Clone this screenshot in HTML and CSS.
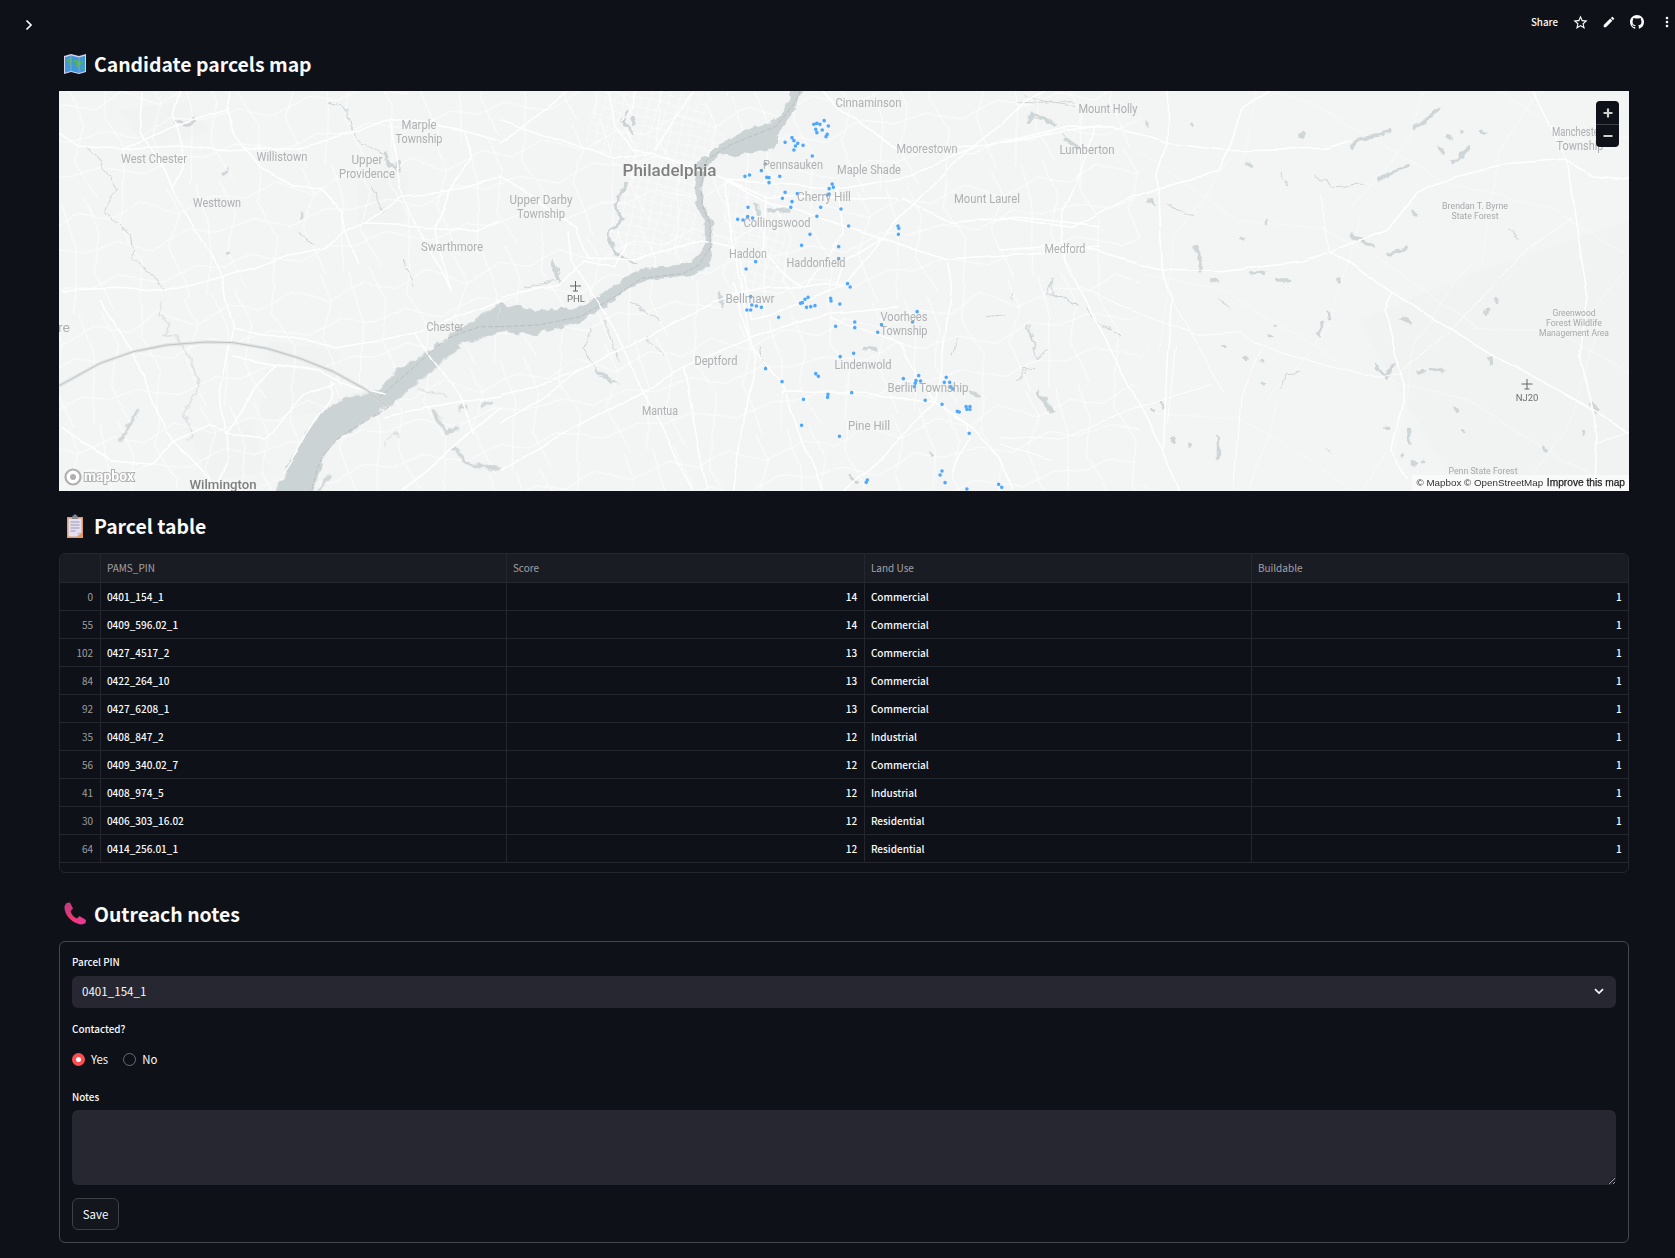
FILE: index.html
```html
<!DOCTYPE html>
<html lang="en">
<head>
<meta charset="utf-8">
<title>Candidate parcels map</title>
<link rel="stylesheet" href="styles.css">
</head>
<body>
<header class="topbar">
  <button class="icon-btn chevron" aria-label="Expand sidebar"><svg width="14" height="14" viewBox="0 0 14 14"><path d="M4.500 2.500 9 7l-4.500 4.500" fill="none" stroke="#fafafa" stroke-width="1.700"/></svg></button>
  <div class="actions">
    <span class="share">Share</span>
    <button class="icon-btn star" aria-label="Star"><svg width="17" height="17" viewBox="0 0 24 24"><path fill="#fafafa" d="M22 9.240l-7.190-.62L12 2 9.190 8.630 2 9.240l5.460 4.730L5.820 21 12 17.270 18.180 21l-1.630-7.030L22 9.240zM12 15.400l-3.760 2.270 1-4.280-3.320-2.880 4.380-.38L12 6.100l1.710 4.040 4.380.38-3.320 2.880 1 4.280L12 15.400z"/></svg></button>
    <button class="icon-btn" aria-label="Edit"><svg width="14" height="14" viewBox="0 0 24 24"><path fill="#fafafa" d="M3 17.250V21h3.750L17.810 9.940l-3.750-3.750L3 17.250zM20.710 7.040c.39-.39.39-1.020 0-1.410l-2.340-2.340c-.39-.39-1.020-.39-1.410 0l-1.830 1.830 3.750 3.750 1.830-1.830z"/></svg></button>
    <button class="icon-btn" aria-label="GitHub"><svg width="14" height="14" viewBox="0 0 16 16"><path fill="#fafafa" d="M8 0C3.580 0 0 3.580 0 8c0 3.540 2.290 6.530 5.470 7.590.4.070.55-.17.55-.38 0-.19-.01-.82-.01-1.490-2.010.37-2.530-.49-2.690-.94-.09-.23-.48-.94-.82-1.130-.28-.15-.68-.52-.01-.53.63-.01 1.080.58 1.230.82.720 1.210 1.870.87 2.330.66.070-.52.28-.87.51-1.070-1.780-.2-3.640-.89-3.640-3.950 0-.87.31-1.590.82-2.150-.08-.2-.36-1.020.08-2.120 0 0 .67-.21 2.200.82.64-.18 1.320-.27 2-.27.68 0 1.360.09 2 .27 1.530-1.040 2.200-.82 2.200-.82.44 1.100.16 1.920.08 2.120.51.56.82 1.270.82 2.150 0 3.070-1.870 3.750-3.650 3.950.29.25.54.73.54 1.480 0 1.070-.01 1.930-.01 2.200 0 .21.15.46.55.38A8.013 8.013 0 0016 8c0-4.420-3.580-8-8-8z"/></svg></button>
    <button class="icon-btn kebab" aria-label="Menu"><svg width="16" height="16" viewBox="0 0 24 24"><path fill="#fafafa" d="M12 8c1.100 0 2-.9 2-2s-.9-2-2-2-2 .9-2 2 .9 2 2 2zm0 2c-1.100 0-2 .9-2 2s.9 2 2 2 2-.9 2-2-.9-2-2-2zm0 6c-1.100 0-2 .9-2 2s.9 2 2 2 2-.9 2-2-.9-2-2-2z"/></svg></button>
  </div>
</header>

<main class="page">
  <h2 class="heading">
    <svg class="emoji" width="24" height="22" viewBox="0 0 24 22"><path d="M1 3 8 1l8 2 7-2v18l-7 2-8-2-7 2z" fill="#d9d4ea"/><path d="M2 4.200 8 2.600l8 2 6-1.800v15.400l-6 1.800-8-2-6 1.800z" fill="#3f97dc"/><path d="M3.500 6 8 5l1.500 2-2 2 1 4-2 .5-1-4-2-1zM11 6l4 1 1 2 3-2 1.500 1.500-2 3-2 .5-1 3-2-.5-1-3-1.500-2zM19 14l1.500 0 .5 2-2 .5z" fill="#4fb06a"/><path d="M8 1v18M16 3v18" stroke="#b9b3d2" stroke-width=".5"/></svg>
    <span>Candidate parcels map</span>
  </h2>

  <section class="map">
    <svg class="map-svg" width="1570" height="400" viewBox="0 0 1570 400" aria-label="Map of the Philadelphia region">
      <defs>
        <pattern id="mesh" width="136" height="112" patternUnits="userSpaceOnUse" patternTransform="rotate(-9)">
          <path class="mesh-line" d="M0 14 30 24 62 10 98 28 136 14M8 0 18 36 6 74 20 112M48 0 40 30 56 66 46 112M92 0 100 28 84 60 98 112M122 0 128 44 116 112M0 52 36 46 70 58 108 44 136 52M0 88 30 80 74 94 110 82 136 88"/>
        </pattern>
        <pattern id="sparse" width="260" height="210" patternUnits="userSpaceOnUse" patternTransform="rotate(24)">
          <path class="mesh-line faint" d="M0 40 90 60 170 30 260 40M60 0 40 100 70 210M200 0 215 120 190 210M0 150 110 130 260 150"/>
        </pattern>
        <pattern id="grid" width="9" height="9" patternUnits="userSpaceOnUse" patternTransform="rotate(14)">
          <path class="mesh-line" d="M0 0H9M0 0V9"/>
        </pattern>
        <filter id="shore" filterUnits="userSpaceOnUse" x="0" y="0" width="1570" height="400">
          <feTurbulence type="fractalNoise" baseFrequency=".11" numOctaves="2" seed="4" result="n"/>
          <feDisplacementMap in="SourceGraphic" in2="n" scale="8" xChannelSelector="R" yChannelSelector="G"/>
        </filter>
        <filter id="curve" filterUnits="userSpaceOnUse" x="0" y="0" width="1570" height="400">
          <feTurbulence type="fractalNoise" baseFrequency=".018" numOctaves="2" seed="9" result="n"/>
          <feDisplacementMap in="SourceGraphic" in2="n" scale="9" xChannelSelector="R" yChannelSelector="G"/>
        </filter>
      </defs>
      <rect class="land" width="1570" height="400"/>
      <path class="park" d="M1300 230 1420 180 1570 130V400H1400z"/>
      <path class="park" d="M60 20 130 10 150 40 90 60zM300 90 350 80 345 130 300 140zM210 250 280 260 270 320 200 330zM130 340 190 330 210 380 150 390z"/>
      <g filter="url(#curve)">
        <rect x="0" y="0" width="1080" height="400" fill="url(#mesh)"/>
        <rect x="1080" y="0" width="490" height="400" fill="url(#sparse)"/>
        <path fill="url(#grid)" d="M537 0H640L668 50 640 90 636 160 580 170 548 145 570 90 525 50zM664 90 720 100 730 190 680 200 664 150z"/>
      </g>

      <!-- water, traced per crop and roughened together -->
      <g filter="url(#shore)">
        <g transform="translate(-59 -91) scale(.33333)">
          <path class="stream" d="M250 440 290 470 350 570 310 640 390 700 400 770 500 870M890 690 940 735M1115 560 1150 640M1210 780 1240 860M990 310 1040 325 1055 400 1080 430 1150 460"/>
          <path class="pond" d="M525 365 555 375 580 358M1155 460 1165 490 1200 510 1190 485M680 510 672 520M905 650 905 645M680 760 686 760"/>
        </g>
        <g transform="translate(-59 209) scale(.33333)">
          <path class="water" d="M1500 10 1420 60 1340 110 1260 170 1190 210 1130 270 1040 290 960 340 900 430 860 510 825 575H940L975 460 1010 420 1090 370 1190 300 1260 240 1300 215 1330 180 1400 130 1500 95z"/>
          <path class="land" d="M1370 135 1410 122 1395 142z"/>
          <path class="stream" d="M490 0 480 50 510 70 490 110 530 105 570 180 600 260 550 340 580 410 560 420M1150 440 1180 400 1200 410M1250 265 1340 290"/>
          <path class="pond" d="M365 420 380 385 415 335M1300 330 1340 400 1370 380M1360 440 1400 490 1500 510M955 570 990 530M1400 320 1380 325M1450 315 1470 310"/>
        </g>
        <g transform="translate(441 -1) scale(.38270 .33333)">
          <path class="water" d="M762 0 745 55 720 90 640 125 560 175 520 215 510 290 512 340 535 400 535 470 500 515 420 535 350 545 280 600 200 655 100 660 0 640V730L100 735 130 720 200 700 280 650 340 590 400 565 505 555 545 530 555 470 555 400 530 340 528 290 540 230 570 190 610 200 720 170 730 125 745 100 770 60 790 0z"/>
          <path class="stream" d="M140 510 150 570 60 590M240 710 220 780 260 860 310 880M270 690 310 810M380 740 430 800M340 640 420 690M680 770 690 840M1375 700 1400 780M1440 560 1440 610 1510 640M1270 680 1320 670M1370 20 1450 40 1500 50M1380 80 1450 95M1470 130 1490 160M1350 870 1380 835M1180 800 1195 740"/>
          <path class="schuylkill" d="M330 280 300 350 320 385 285 430 300 490 355 520M330 60 320 100 350 130"/>
          <path class="pond" d="M570 605 585 650M140 520 155 570M250 840 290 870M950 775 985 780M1230 905 1255 920M1420 920 1445 965M1125 1090 1130 1095M915 1160 935 1180M345 85 350 100M670 340 672 370M700 360 760 360"/>
        </g>
        <g transform="translate(941 -1) scale(.40820 .33333)">
          <path class="stream" d="M130 560 115 610 195 640M210 650 240 700 295 735M35 600 30 630M70 700 90 810 120 770M40 870 60 835 90 840M45 35 90 40 180 35M405 345 475 380M685 245 705 285M530 620 565 660M1250 420 1270 450M770 260 820 290 890 285M690 895 695 855 740 850M800 1075 810 1090"/>
          <path class="pond" d="M1015 110 1040 95 1075 55M860 170 880 150 955 125M1100 140 1105 145M1130 125 1132 127M1180 130 1186 128M1075 175 1085 190M1150 170 1110 215M930 270 960 245 1000 230M605 215 612 228M650 395 650 402M590 445 594 447M860 435 915 470M950 490 995 475M615 545 650 548M680 570 705 570M830 570 831 578M520 570 530 577M780 735 790 700M805 670 808 690M670 705 675 705M660 738 668 740M985 685 1005 695M920 825 945 860 965 825M1025 845 1035 845M1050 835 1085 840M1215 628 1215 635M1195 655 1192 670M1200 805 1202 820M640 815 642 818M640 880 650 885M90 905 125 965M1115 955 1118 958M945 1015 955 1015M1000 1015 1005 1060M1010 1120 1020 1118M985 1095 988 1098M1035 1115 1038 1113M425 1045 425 1055M465 1065 466 1068M535 1040 535 1100M1430 1030 1432 1030M1130 1022 1133 1028M1335 1075 1338 1082M1450 940 1460 960M1010 365 1015 372M480 470 490 500 490 540M365 330 380 345M160 150 190 170M70 100 80 70 135 100M360 100 362 105M465 100 466 103M605 800 600 805M545 770 546 772M395 940 395 950M375 958 378 960M740 140 745 130"/>
        </g>
      </g>

      <!-- roads, traced per crop -->
      <g filter="url(#curve)">
        <g transform="translate(-59 -91) scale(.33333)">
          <path class="rd" d="M177 400 230 435 370 445 540 438 680 452 760 450 880 445 1060 400 1170 355 1390 390 1500 420M430 275 420 400 500 510 530 590 670 830 680 900M540 275 520 340 545 430 550 500 520 560M370 445 520 380 680 330 690 275M680 330 700 400 770 500 880 555 960 560 1030 640 1040 690 1080 800M670 830 780 800 860 765 970 745 1040 690 1100 675 1250 680 1430 690 1500 660M180 870 350 865 500 875 670 830M1100 675 1210 585 1350 575 1500 535M1170 355 1200 560 1210 585 1300 770 1350 870M1390 390 1415 470 1350 575 1310 680 1330 800 1350 870"/>
        </g>
        <g transform="translate(-59 209) scale(.33333)">
          <path class="rd" d="M680 0 700 80 680 170 660 260 680 420 680 490 640 575M180 380 230 420 340 480 460 490 520 430 630 380 680 400 800 410 870 340 910 290 990 260 1010 250M700 170 950 215 1040 250 1160 280M830 195 770 260 680 400M300 0 380 130 430 220 500 400 520 430 660 575M700 85 1000 140 1160 115 1240 100 1500 0M1240 100 1380 290 1420 400M1150 350 1500 290M1500 320 1390 410 1200 575M850 520 1000 290 1000 240"/>
        </g>
        <g transform="translate(441 -1) scale(.38270 .33333)">
          <path class="rd" d="M0 85 110 130 300 210 400 190 590 270 680 330 910 410 1170 510 1420 490 1568 470M660 690 790 640 900 590 1000 440 1170 240 1370 30 1420 0M590 270 880 295 1050 260 1250 170 1568 100M1050 320 1180 400 1360 385 1568 410M590 270 690 320 1040 325M620 520 660 770 735 880 790 1060 840 1200M0 915 220 840 400 730 550 640 700 590 900 590M0 1140 280 960 480 830 670 740 860 670 1040 650M610 580 640 700 670 800 650 900 610 1200M735 910 950 910 1140 940 1230 1010 1300 1100 1340 1200M1170 520 1180 600 1150 880 1140 940 1000 1100 900 1200M860 680 1050 760 1100 870 1140 940M280 0 300 100 320 130 350 180 400 190M320 90 350 50 355 0M0 260 200 410 230 500 350 510 530 450 600 470 620 520M0 620 150 590 220 510 300 530 330 460M590 270 600 460 630 520 660 690M690 320 680 490 790 590M1000 440 900 510 880 590M880 295 900 430 800 590M840 0 880 60 1040 180 1250 170M500 0 410 180M180 0 0 160M180 420 190 520 300 720 500 1200M0 1000 220 840M480 830 540 1200M1140 940 1215 1000 1220 1040 1180 1150"/>
        </g>
        <g transform="translate(941 -1) scale(.40820 .33333)">
          <path class="rd" d="M0 480 110 470 230 480 395 540 540 545 745 515 810 485 940 420 1020 310 1110 260 1225 225 1390 210 1450 255 1540 265M810 485 965 610 1105 715 1300 860 1540 1025M410 0 410 160 385 250 395 540 420 630 410 800 400 1080 440 1200M660 0 590 55 540 250 385 295 320 320 180 415 0 385M0 155 170 105 270 105 410 160 550 180 800 175 860 150M230 100 210 210 150 370 160 520 185 590 260 760 400 1080M1390 210 1400 310 1440 620 1420 800 1460 1040 1455 1200M965 610 945 660 985 880 985 940 960 1080 1000 1170M1300 0 1390 210"/>
          <path class="rd-thin" d="M1105 715 985 840M1105 715 1300 470 1400 380M780 310 810 485M185 590 480 735 590 725 620 760 790 825 930 865 985 850M1455 1060 1540 1020M420 630 550 910M430 770 410 1000M0 1040 150 1050 300 970 520 880M0 1060 130 1110M640 780 590 930 575 1200"/>
        </g>
      </g>

      <!-- boundaries and data points -->
      <g transform="translate(-59 209) scale(.33333)">
        <path class="arc-glow" d="M178 257 300 190 400 155 500 135 620 126 700 128 800 145 900 175 1000 215 1100 270 1165 322"/>
        <path class="arc" d="M178 257 300 190 400 155 500 135 620 126 700 128 800 145 900 175 1000 215 1100 270 1165 322"/>
        <path class="border" d="M1500 80 1440 80 1340 115 1135 295M1165 322 1020 410 970 465 950 510 935 575"/>
      </g>
      <g transform="translate(441 -1) scale(.38270 .33333)">
        <path class="border" d="M785 0 770 40 720 110 600 165 540 210 525 290 530 350 548 400 550 470 520 525 480 550 370 565 300 620 210 680 100 705 0 710"/>
        <path class="dots" d="M820 103h0M828 100h0M836 103h0M847 92h0M858 108h0M842 120h0M825 118h0M828 128h0M855 133h0M852 140h0M763 143h0M768 152h0M745 157h0M778 160h0M772 168h0M768 180h0M792 166h0M816 198h0M693 222h0M683 242h0M652 255h0M640 259h0M697 262h0M703 263h0M703 278h0M731 259h0M868 282h0M871 292h0M860 296h0M745 307h0M777 311h0M738 325h0M763 335h0M860 312h0M855 315h0M838 352h0M891 357h0M760 352h0M648 352h0M647 380h0M660 384h0M635 390h0M621 388h0M828 379h0M911 408h0M1040 408h0M1042 415h0M1041 433h0M810 433h0M788 466h0M885 470h0M885 506h0M668 515h0M643 537h0M908 581h0M915 591h0M805 622h0M797 628h0M790 638h0M785 640h0M864 625h0M865 633h0M888 642h0M823 647h0M812 650h0M801 652h0M655 620h0M658 645h0M670 648h0M683 652h0M645 660h0M655 660h0M728 682h0M1090 665h0M1078 696h0M997 704h0M927 696h0M927 713h0M877 709h0M987 727h0M889 800h0M924 790h0M694 836h0M825 851h0M832 859h0M737 875h0M1054 866h0M1094 857h0M1087 872h0M1099 873h0M1085 880h0M1083 890h0M1166 862h0M1161 877h0M1175 877h0M1178 890h0M1184 897h0M857 913h0M856 922h0M919 908h0M793 928h0M1111 931h0M1155 943h0M1195 964h0M1200 966h0M1218 950h0M1228 950h0M1220 958h0M1228 958h0M788 1006h0M887 1039h0M1226 1030h0M1155 1143h0M1150 1155h0M1163 1178h0M960 1170h0M957 1177h0M1303 1183h0M1311 1192h0M1220 1197h0"/>
      </g>

      <g class="labels">
        <text x="5" y="241" text-anchor="middle" textLength="12" lengthAdjust="spacingAndGlyphs">re</text>
        <text x="360" y="38" text-anchor="middle" textLength="35" lengthAdjust="spacingAndGlyphs">Marple</text>
        <text x="360" y="52" text-anchor="middle" textLength="47" lengthAdjust="spacingAndGlyphs">Township</text>
        <text x="95" y="72" text-anchor="middle" textLength="66" lengthAdjust="spacingAndGlyphs">West Chester</text>
        <text x="223" y="70" text-anchor="middle" textLength="51" lengthAdjust="spacingAndGlyphs">Willistown</text>
        <text x="308" y="73" text-anchor="middle" textLength="31" lengthAdjust="spacingAndGlyphs">Upper</text>
        <text x="308" y="87" text-anchor="middle" textLength="56" lengthAdjust="spacingAndGlyphs">Providence</text>
        <text x="158" y="116" text-anchor="middle" textLength="48" lengthAdjust="spacingAndGlyphs">Westtown</text>
        <text x="393" y="160" text-anchor="middle" textLength="62" lengthAdjust="spacingAndGlyphs">Swarthmore</text>
        <text x="482" y="113" text-anchor="middle" textLength="63" lengthAdjust="spacingAndGlyphs">Upper Darby</text>
        <text x="482" y="127" text-anchor="middle" textLength="48" lengthAdjust="spacingAndGlyphs">Township</text>
        <text x="809.500" y="16" text-anchor="middle" textLength="66" lengthAdjust="spacingAndGlyphs">Cinnaminson</text>
        <text x="868" y="62" text-anchor="middle" textLength="61" lengthAdjust="spacingAndGlyphs">Moorestown</text>
        <text x="734" y="78" text-anchor="middle" textLength="60" lengthAdjust="spacingAndGlyphs">Pennsauken</text>
        <text x="810" y="83" text-anchor="middle" textLength="64" lengthAdjust="spacingAndGlyphs">Maple Shade</text>
        <text x="765" y="110" text-anchor="middle" textLength="54" lengthAdjust="spacingAndGlyphs">Cherry Hill</text>
        <text x="928" y="112" text-anchor="middle" textLength="66" lengthAdjust="spacingAndGlyphs">Mount Laurel</text>
        <text x="718" y="136" text-anchor="middle" textLength="67" lengthAdjust="spacingAndGlyphs">Collingswood</text>
        <text x="689" y="167" text-anchor="middle" textLength="38" lengthAdjust="spacingAndGlyphs">Haddon</text>
        <text x="757" y="176" text-anchor="middle" textLength="59" lengthAdjust="spacingAndGlyphs">Haddonfield</text>
        <text x="1006" y="162" text-anchor="middle" textLength="41" lengthAdjust="spacingAndGlyphs">Medford</text>
        <text x="691" y="212" text-anchor="middle" textLength="49" lengthAdjust="spacingAndGlyphs">Bellmawr</text>
        <text x="845" y="230" text-anchor="middle" textLength="47" lengthAdjust="spacingAndGlyphs">Voorhees</text>
        <text x="845" y="244" text-anchor="middle" textLength="47" lengthAdjust="spacingAndGlyphs">Township</text>
        <text x="657" y="274" text-anchor="middle" textLength="43" lengthAdjust="spacingAndGlyphs">Deptford</text>
        <text x="804" y="278" text-anchor="middle" textLength="57" lengthAdjust="spacingAndGlyphs">Lindenwold</text>
        <text x="869" y="301" text-anchor="middle" textLength="81" lengthAdjust="spacingAndGlyphs">Berlin Township</text>
        <text x="601" y="324" text-anchor="middle" textLength="36" lengthAdjust="spacingAndGlyphs">Mantua</text>
        <text x="810" y="339" text-anchor="middle" textLength="42" lengthAdjust="spacingAndGlyphs">Pine Hill</text>
        <text x="386" y="240" text-anchor="middle" textLength="37" lengthAdjust="spacingAndGlyphs">Chester</text>
        <text x="1049" y="22" text-anchor="middle" textLength="59" lengthAdjust="spacingAndGlyphs">Mount Holly</text>
        <text x="1028" y="63" text-anchor="middle" textLength="55" lengthAdjust="spacingAndGlyphs">Lumberton</text>
        <text x="1493" y="45" textLength="50" lengthAdjust="spacingAndGlyphs">Manchester</text>
        <text x="1521" y="59" text-anchor="middle" textLength="47" lengthAdjust="spacingAndGlyphs">Township</text>
      </g>
      <g class="labels small">
        <text x="1416" y="118" text-anchor="middle" textLength="66" lengthAdjust="spacingAndGlyphs">Brendan T. Byrne</text>
        <text x="1416" y="128" text-anchor="middle" textLength="47" lengthAdjust="spacingAndGlyphs">State Forest</text>
        <text x="1515" y="225" text-anchor="middle" textLength="43" lengthAdjust="spacingAndGlyphs">Greenwood</text>
        <text x="1515" y="235" text-anchor="middle" textLength="56" lengthAdjust="spacingAndGlyphs">Forest Wildlife</text>
        <text x="1515" y="245" text-anchor="middle" textLength="70" lengthAdjust="spacingAndGlyphs">Management Area</text>
        <text x="1424" y="383" text-anchor="middle" textLength="69" lengthAdjust="spacingAndGlyphs">Penn State Forest</text>
      </g>
      <text class="city" x="610.500" y="85" text-anchor="middle" textLength="94" lengthAdjust="spacingAndGlyphs">Philadelphia</text>
      <text class="city small-city" x="164" y="398" text-anchor="middle" textLength="67" lengthAdjust="spacingAndGlyphs">Wilmington</text>
      <g class="airport">
        <path d="M516.500 190v10M511 195h11M514 200h5"/>
        <path d="M1468 288v10M1462.500 293h11M1465.500 298h5"/>
      </g>
      <text class="code" x="517" y="211" text-anchor="middle">PHL</text>
      <text class="code" x="1468" y="310" text-anchor="middle">NJ20</text>
      <g class="logo">
        <circle cx="14" cy="386" r="7.500"/>
        <circle class="logo-in" cx="14" cy="386" r="3"/>
        <text x="25" y="390" textLength="50" lengthAdjust="spacingAndGlyphs">mapbox</text>
      </g>
    </svg>
    <div class="zoomctl">
      <button class="zoombtn" aria-label="Zoom in"><svg width="12" height="12" viewBox="0 0 12 12"><path d="M6 1.500v9M1.500 6h9" stroke="#d0d0d0" stroke-width="2.200"/></svg></button>
      <button class="zoombtn" aria-label="Zoom out"><svg width="12" height="12" viewBox="0 0 12 12"><path d="M1.500 6h9" stroke="#d0d0d0" stroke-width="2.200"/></svg></button>
    </div>
    <div class="attrib"><span>© Mapbox</span> <span>© OpenStreetMap</span> <strong>Improve this map</strong></div>
  </section>

  <h2 class="heading second">
    <svg class="emoji" width="24" height="24" viewBox="0 0 24 24"><path d="M4 3h16v21H4z" fill="#e39b62"/><path d="M5.500 4.500h13v14l-4 4h-9z" fill="#e4e0f0"/><path d="M14.500 22.500v-4h4z" fill="#c9c3da"/><path d="M9.500 3V1.500h1.500V.5h2v1h1.500V3l1 2h-7z" fill="#8a8a96"/><path d="M7.500 8h9M7.500 11h9M7.500 14h9M7.500 17h5" stroke="#9b96b0" stroke-width="1"/></svg>
    <span>Parcel table</span>
  </h2>

  <section class="table-wrap">
    <table class="grid">
      <colgroup><col class="c0"><col class="c1"><col class="c2"><col class="c3"><col class="c4"></colgroup>
      <thead><tr><th></th><th>PAMS_PIN</th><th>Score</th><th>Land Use</th><th>Buildable</th></tr></thead>
      <tbody>
        <tr><th>0</th><td>0401_154_1</td><td class="num">14</td><td>Commercial</td><td class="num">1</td></tr>
        <tr><th>55</th><td>0409_596.02_1</td><td class="num">14</td><td>Commercial</td><td class="num">1</td></tr>
        <tr><th>102</th><td>0427_4517_2</td><td class="num">13</td><td>Commercial</td><td class="num">1</td></tr>
        <tr><th>84</th><td>0422_264_10</td><td class="num">13</td><td>Commercial</td><td class="num">1</td></tr>
        <tr><th>92</th><td>0427_6208_1</td><td class="num">13</td><td>Commercial</td><td class="num">1</td></tr>
        <tr><th>35</th><td>0408_847_2</td><td class="num">12</td><td>Industrial</td><td class="num">1</td></tr>
        <tr><th>56</th><td>0409_340.02_7</td><td class="num">12</td><td>Commercial</td><td class="num">1</td></tr>
        <tr><th>41</th><td>0408_974_5</td><td class="num">12</td><td>Industrial</td><td class="num">1</td></tr>
        <tr><th>30</th><td>0406_303_16.02</td><td class="num">12</td><td>Residential</td><td class="num">1</td></tr>
        <tr><th>64</th><td>0414_256.01_1</td><td class="num">12</td><td>Residential</td><td class="num">1</td></tr>
      </tbody>
    </table>
  </section>

  <h2 class="heading third">
    <svg class="emoji" width="24" height="24" viewBox="0 0 24 24"><defs><linearGradient id="ph" x1="0" y1="0" x2="1" y2="1"><stop offset="0" stop-color="#b93a8e"/><stop offset=".5" stop-color="#f0386f"/><stop offset="1" stop-color="#e23aa0"/></linearGradient></defs><path d="M3.500 1 7 .5l3 6-2.500 2.500c.8 3.500 3 6 6.500 7.500l2.500-2.500 6.500 4-.5 3c-2 1.500-5 2-8 .5C7 19 2.500 13 1.500 6.500 1.300 4.500 2 2.500 3.500 1z" fill="url(#ph)"/></svg>
    <span>Outreach notes</span>
  </h2>

  <form class="form">
    <label class="field-label">Parcel PIN</label>
    <div class="select"><span>0401_154_1</span><svg width="14" height="14" viewBox="0 0 14 14"><path d="M3 5.200 7 9l4-3.800" fill="none" stroke="#fafafa" stroke-width="1.700"/></svg></div>
    <label class="field-label contacted">Contacted?</label>
    <div class="radios">
      <span class="radio on"><i class="dot"></i>Yes</span>
      <span class="radio"><i class="dot"></i>No</span>
    </div>
    <label class="field-label notes">Notes</label>
    <textarea class="textarea" aria-label="Notes"></textarea>
    <button type="button" class="save">Save</button>
  </form>
</main>
</body>
</html>
```
FILE: styles.css
```css
* { box-sizing: border-box; }
html, body { margin: 0; height: 100%; }
body {
  background: #0e1117;
  color: #fafafa;
  font-family: "Noto Sans CJK SC", "Noto Sans", sans-serif;
  overflow: hidden;
  color-scheme: dark;
}
button { font-family: inherit; color: inherit; background: none; border: 0; padding: 0; }

.topbar { display: flex; justify-content: space-between; align-items: center; height: 45px; padding-top: 1px; }
.chevron { margin-left: 15px; margin-top: 3px; }
.actions { display: flex; align-items: center; margin-top: -2px; }
.share { font-size: 9.8px; font-weight: 500; line-height: 16px; margin-right: 8px; }
.icon-btn { display: flex; align-items: center; justify-content: center; width: 28px; height: 28px; }
.star { width: 29px; padding-right: 1px; }
.kebab { width: 16px; margin-left: 8px; }

.page { padding: 0 46px 0 59px; }
.heading { display: flex; align-items: center; gap: 7px; height: 38px; margin: 0 0 8px; padding: 0 0 1px 4px; font-size: 19.4px; font-weight: 600; line-height: 36px; }
.emoji { flex: none; }
.second { margin-top: 16px; }
.third { margin-top: 23px; margin-bottom: 7px; padding-bottom: 3px; }

.map { position: relative; height: 400px; overflow: hidden; }
.map-svg { display: block; }
.land { fill: #f3f4f4; }
.park { fill: #f1f2f2; }
.mesh-line { fill: none; stroke: #fff; stroke-width: .8; }
.mesh-line.faint { opacity: .55; }
.map-svg path { vector-effect: non-scaling-stroke; }
.rd { fill: none; stroke: #fff; stroke-width: 1.5; stroke-linejoin: round; }
.rd-thin { fill: none; stroke: #fff; stroke-width: .9; }
.water { fill: #ccd3d5; }
.stream { fill: none; stroke: #cdd4d6; stroke-width: 1; stroke-linejoin: round; }
.schuylkill { fill: none; stroke: #cdd4d6; stroke-width: 2.6; stroke-linejoin: round; }
.pond { fill: none; stroke: #cfd6d8; stroke-width: 3.4; stroke-linecap: round; stroke-linejoin: round; }
.arc-glow { fill: none; stroke: #d8dada; stroke-width: 3.5; opacity: .6; }
.arc { fill: none; stroke: #bfc3c3; stroke-width: 1; }
.border { fill: none; stroke: #b6b9ba; stroke-width: .8; stroke-dasharray: 5 2; }
.dots { fill: none; stroke: #4fa8ff; stroke-width: 3.600; stroke-linecap: round; }
.labels text { font-family: Roboto, sans-serif; font-size: 12.5px; fill: #aeb0b1; }
.labels.small text { font-size: 9.5px; fill: #a6a9aa; }
.city { font-family: Roboto, sans-serif; font-size: 16.5px; font-weight: 500; fill: #808080; }
.small-city { font-size: 13px; fill: #7e7e7e; }
.airport path { fill: none; stroke: #666; stroke-width: 1; }
.code { font-family: Roboto, sans-serif; font-size: 9.500px; fill: #6f6f6f; }
.logo circle { fill: #fff; stroke: #b0b0b0; stroke-width: 2.200; }
.logo .logo-in { fill: #b0b0b0; stroke: none; }
.logo text { font-family: Roboto, sans-serif; font-size: 14px; font-weight: 700; fill: #fff; stroke: #b0b0b0; stroke-width: 2; paint-order: stroke; }

.zoomctl { position: absolute; top: 10px; right: 10px; width: 23px; height: 46px; background: #0e1117; border-radius: 4px; overflow: hidden; }
.zoombtn { display: flex; align-items: center; justify-content: center; width: 23px; height: 23px; }
.zoombtn + .zoombtn { border-top: 1px solid #3d3f45; }
.attrib { position: absolute; right: 0; bottom: 0; height: 16px; padding: 0 4px; background: rgba(255, 255, 255, .55); color: #333; font-family: "Liberation Sans", Arial, sans-serif; font-size: 9.8px; line-height: 16px; white-space: nowrap; }
.attrib strong { font-weight: 400; font-size: 10.2px; color: #1f1f1f; margin-left: 1px; -webkit-text-stroke: .25px #1f1f1f; }

.table-wrap { height: 320px; border: 1px solid #24272d; border-radius: 6px; overflow: hidden; }
.grid { width: 1568px; table-layout: fixed; border-collapse: collapse; font-size: 10px; }
.c0 { width: 40px; }
.c1 { width: 406px; }
.c2 { width: 358px; }
.c3 { width: 387px; }
.c4 { width: 377px; }
.grid th, .grid td { height: 28px; padding: 1px 6.4px 0; border-bottom: 1px solid #24272d; border-right: 1px solid #24272d; white-space: nowrap; font-weight: 500; line-height: 16px; }
.grid th { font-weight: 400; }
.grid th:last-child, .grid td:last-child { border-right: 0; }
.grid thead th { height: 28px; background: #1a1c24; color: rgba(250, 250, 250, .6); text-align: left; }
.grid tbody th { color: rgba(250, 250, 250, .6); text-align: right; }
.grid .num { text-align: right; }

.form { display: flex; flex-direction: column; align-items: flex-start; height: 302px; padding: 12px 12px 11px; border: 1px solid #44464c; border-radius: 6px; }
.field-label { display: block; height: 16px; font-size: 9.9px; font-weight: 500; line-height: 16px; }
.select { display: flex; align-items: center; justify-content: space-between; align-self: stretch; height: 32px; margin-top: 6px; padding: 0 10px 2px 10px; background: #262730; border-radius: 6px; font-size: 11.6px; }
.contacted { margin-top: 13px; }
.radios { display: flex; align-items: center; gap: 15px; height: 20px; margin-top: 12px; font-size: 11.4px; }
.radio { display: flex; align-items: center; gap: 6px; line-height: 24px; }
.dot { width: 13px; height: 13px; border: 1px solid #6b6d74; border-radius: 50%; }
.on .dot { background: #fff; border: 4px solid #ff4b4b; }
.notes { margin-top: 20px; }
.textarea { display: block; align-self: stretch; height: 75px; margin-top: 5px; background: #262730; border: 0; border-radius: 6px; color: #fafafa; resize: vertical; outline: none; }
.save { width: 47px; height: 32px; margin-top: 13px; border: 1px solid #3e4047; border-radius: 6px; font-size: 11.4px; line-height: 16px; background: #13161d; }
```
